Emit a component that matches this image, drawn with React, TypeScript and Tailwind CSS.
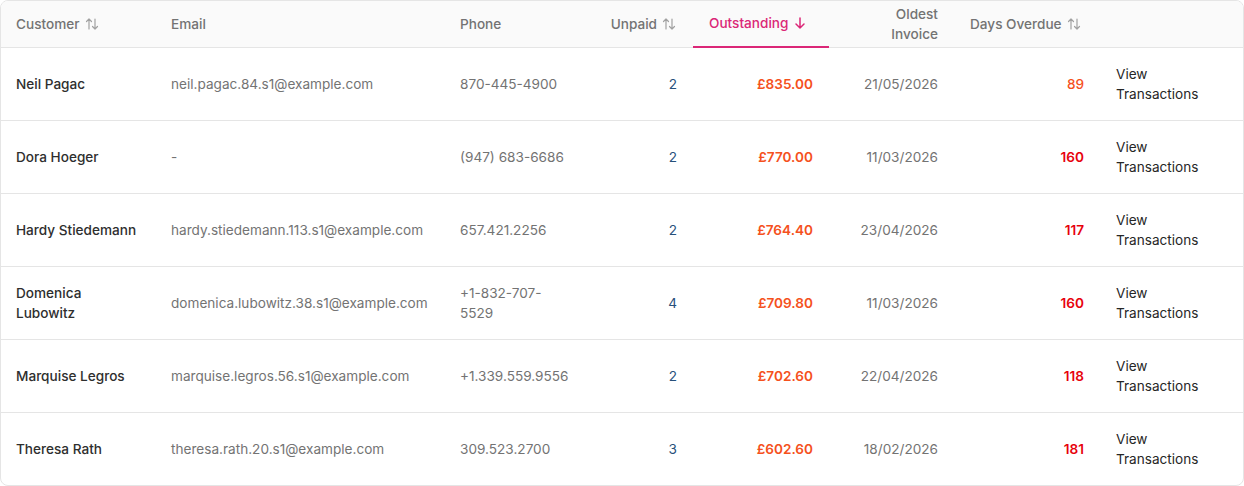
import React from 'react';

type Row = {
  name: string;
  email: string;
  phone: string;
  unpaid: number;
  outstanding: string;
  oldest: string;
  days: number;
};

const rows: Row[] = [
  { name: 'Neil Pagac', email: 'neil.pagac.84.s1@example.com', phone: '870-445-4900', unpaid: 2, outstanding: '£835.00', oldest: '21/05/2026', days: 89 },
  { name: 'Dora Hoeger', email: '-', phone: '(947) 683-6686', unpaid: 2, outstanding: '£770.00', oldest: '11/03/2026', days: 160 },
  { name: 'Hardy Stiedemann', email: 'hardy.stiedemann.113.s1@example.com', phone: '657.421.2256', unpaid: 2, outstanding: '£764.40', oldest: '23/04/2026', days: 117 },
  { name: 'Domenica Lubowitz', email: 'domenica.lubowitz.38.s1@example.com', phone: '+1-832-707-5529', unpaid: 4, outstanding: '£709.80', oldest: '11/03/2026', days: 160 },
  { name: 'Marquise Legros', email: 'marquise.legros.56.s1@example.com', phone: '+1.339.559.9556', unpaid: 2, outstanding: '£702.60', oldest: '22/04/2026', days: 118 },
  { name: 'Theresa Rath', email: 'theresa.rath.20.s1@example.com', phone: '309.523.2700', unpaid: 3, outstanding: '£602.60', oldest: '18/02/2026', days: 181 },
];

function SortIcon() {
  return (
    <svg className="inline-block w-4 h-4 ml-1 text-neutral-400 align-[-3px]" viewBox="0 0 16 16" fill="none" stroke="currentColor" strokeWidth="1.2" strokeLinecap="round" strokeLinejoin="round">
      <path d="M5 13V3M2.5 5.5 5 3l2.5 2.5" />
      <path d="M11 3v10M8.5 10.5 11 13l2.5-2.5" />
    </svg>
  );
}

function DownArrow() {
  return (
    <svg className="inline-block w-4 h-4 ml-1 align-[-3px]" viewBox="0 0 16 16" fill="none" stroke="currentColor" strokeWidth="1.5" strokeLinecap="round" strokeLinejoin="round">
      <path d="M8 3v10M4 9l4 4 4-4" />
    </svg>
  );
}

export default function App() {
  return (
    <div className="w-[1244px] h-[486px] bg-white" style={{ fontFamily: 'Inter, "Noto Sans", sans-serif' }}>
      <div className="border border-neutral-200 rounded-lg overflow-hidden">
        <table className="w-full table-fixed border-collapse text-[13.6px]">
          <colgroup>
            <col className="w-[154px]" />
            <col className="w-[289px]" />
            <col className="w-[149px]" />
            <col className="w-[100px]" />
            <col className="w-[136px]" />
            <col className="w-[125px]" />
            <col className="w-[146px]" />
            <col />
          </colgroup>
          <thead className="bg-neutral-50">
            <tr className="h-[46px] border-b border-neutral-200 text-neutral-500">
              <th className="pl-[15px] pr-4 text-left font-medium whitespace-nowrap">Customer<SortIcon /></th>
              <th className="px-4 text-left font-medium">Email</th>
              <th className="px-4 text-left font-medium">Phone</th>
              <th className="px-4 text-right font-medium whitespace-nowrap">Unpaid<SortIcon /></th>
              <th className="px-4 text-left font-medium whitespace-nowrap text-[#db2777] border-b-2 border-[#db2777]">Outstanding<DownArrow /></th>
              <th className="px-4 text-right font-medium leading-5">Oldest<br />Invoice</th>
              <th className="px-4 text-left font-medium whitespace-nowrap">Days Overdue<SortIcon /></th>
              <th className="px-4"></th>
            </tr>
          </thead>
          <tbody>
            {rows.map((r, i) => (
              <tr key={r.name} className={`h-[73px] leading-5 ${i < rows.length - 1 ? 'border-b border-neutral-200' : ''}`}>
                <td className="pl-[15px] pr-4 font-medium text-[#2e2e2e]">{r.name}</td>
                <td className="px-4 text-neutral-500">{r.email}</td>
                <td className="px-4 pr-6 text-neutral-500">{r.phone}</td>
                <td className="px-4 text-right text-[#27507a]">{r.unpaid}</td>
                <td className="px-4 text-right font-semibold text-[#f5511d]">{r.outstanding}</td>
                <td className="px-4 text-right text-neutral-500">{r.oldest}</td>
                <td className={`px-4 text-right ${r.days < 100 ? 'font-medium text-[#f5511d]' : 'font-semibold text-red-600'}`}>{r.days}</td>
                <td className="px-4 text-neutral-800">View Transactions</td>
              </tr>
            ))}
          </tbody>
        </table>
      </div>
    </div>
  );
}
